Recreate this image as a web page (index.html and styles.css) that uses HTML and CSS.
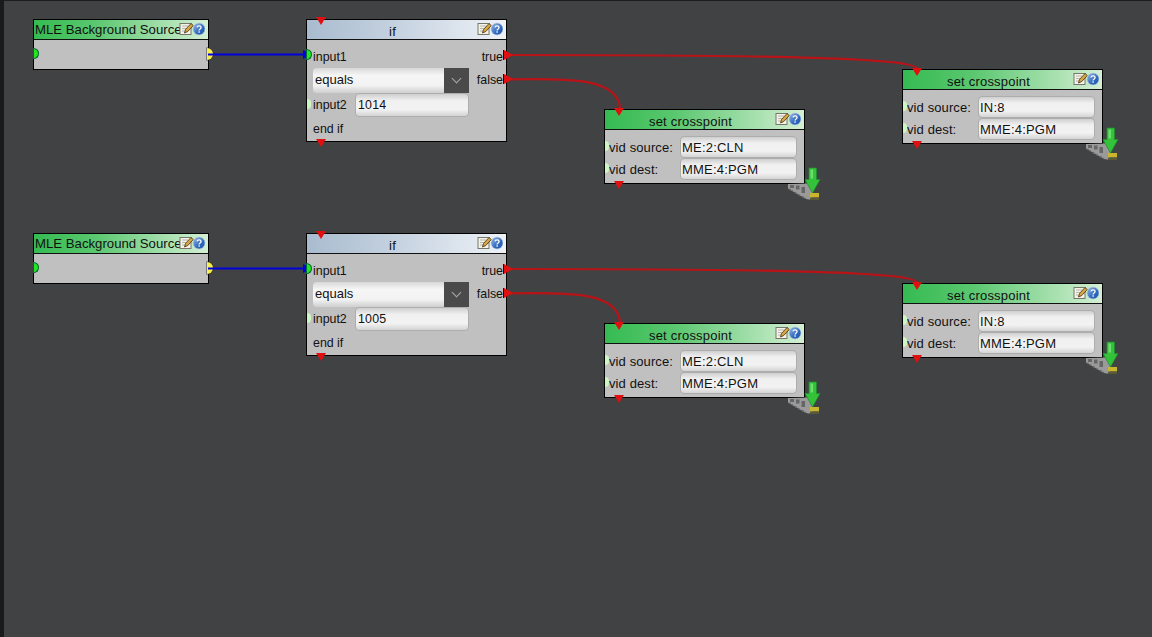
FILE: index.html
```html
<!DOCTYPE html>
<html lang="en">
<head>
<meta charset="utf-8">
<title>Logic graph</title>
<link rel="stylesheet" href="styles.css">
</head>
<body>
<svg class="defs" width="0" height="0" aria-hidden="true">
  <defs>
    <linearGradient id="helpfill" x1="0" y1="0" x2="1" y2="1"><stop offset="0" stop-color="#9dbde8"/><stop offset=".6" stop-color="#2f68bd"/><stop offset="1" stop-color="#1f55a8"/></linearGradient>
    <symbol id="tools" viewBox="0 0 26 14">
      <rect x="1" y="1.500" width="11" height="11" fill="#f4f2e6" stroke="#77766c"/>
      <path d="M3 4h6M3 6.500h4M3 9h3" stroke="#a5a49a" stroke-width=".8"/>
      <path d="M5.500 11l1-3.500 5.500-6 2.300 2-5.500 6z" fill="#d9a441" stroke="#3f3217" stroke-width=".8"/>
      <circle cx="20" cy="7" r="6" fill="url(#helpfill)" stroke="#b9cbe2" stroke-width=".6"/>
      <path d="M18 5.400c.3-1.900 4.100-2 4.100.2 0 1.400-2 1.300-2 2.800" fill="none" stroke="#fff" stroke-width="1.300"/>
      <rect x="19.400" y="9.300" width="1.400" height="1.400" fill="#fff"/>
    </symbol>
    <symbol id="deploy" viewBox="0 0 36 36">
      <path d="M2 17l20-.5 4 8v8.500l-6-1-18-10.500z" fill="#9a9a9a"/>
      <path d="M4 18h4v3h-4zM10 18.500h3.500v4h-3.500zM15.500 20h3.500v6h-3.500z" fill="#666"/>
      <path d="M3 22l4 2M9 25.500l5 3M16 29.500l4 2" stroke="#6a6a6a" stroke-width="1.500" stroke-dasharray="2 1.500"/>
      <path d="M24 26h9v4.500h-9z" fill="#c9b62e"/>
      <path d="M24 30.500h9v2.500h-9z" fill="#5a5a3a"/>
      <path d="M23 1h7.500v11.500h3.500l-7.500 13.500-7.500-13.500h4z" fill="#33c23a" stroke="#1d8f2c" stroke-width=".7"/>
      <path d="M24.500 2.500h2.500v9h-2.500z" fill="#6fdc70"/>
    </symbol>
  </defs>
</svg>
<main class="canvas">
  <section class="flow">
    <svg class="wires" viewBox="0 0 1152 214" width="1152" height="214" aria-hidden="true">
      <path class="wire blue" d="M208 54.500H304"/>
      <path class="head-blue" d="M303 50l9 4.500-9 4.500z"/>
      <path class="wire red" d="M506 55C780 55 917 58 917 69"/>
      <path class="wire red" d="M506 79.500C570 78 620 78 620 110"/>
    </svg>
    <article class="node source-node">
      <header class="head green"><span class="left-title">MLE Background Source</span><svg class="tools"><use href="#tools"/></svg></header>
      <div class="source-body"></div>
      <i class="port-in"></i><i class="port-out"></i>
    </article>
    <article class="node if-node">
      <header class="head steel"><span class="center-title">if</span><svg class="tools"><use href="#tools"/></svg></header>
      <div class="if-body">
        <div class="if-row"><span>input1</span><span>true</span></div>
        <div class="if-row"><div class="select"><span>equals</span><b class="chev"></b></div><span>false</span></div>
        <div class="if-row start"><span class="if-label">input2</span><div class="field wide">1014</div></div>
        <div class="if-row"><span>end if</span></div>
      </div>
      <i class="tri top"></i><i class="tri bottom"></i>
      <i class="port-pale p1"></i><i class="port-pale p2"></i><i class="out o1"></i><i class="out o2"></i>
      <i class="port-in small"></i>
    </article>
    <article class="node cross-node cross-a">
      <header class="head green"><span class="center-title">set crosspoint</span><svg class="tools"><use href="#tools"/></svg></header>
      <div class="cross-body">
        <div class="cross-row"><span class="cross-label">vid source:</span><div class="field">ME:2:CLN</div></div>
        <div class="cross-row"><span class="cross-label">vid dest:</span><div class="field">MME:4:PGM</div></div>
      </div>
      <i class="tri top"></i><i class="tri bottom"></i><i class="port-pale c1"></i><i class="port-pale c2"></i>
      <svg class="deploy"><use href="#deploy"/></svg>
    </article>
    <article class="node cross-node cross-b">
      <header class="head green"><span class="center-title">set crosspoint</span><svg class="tools"><use href="#tools"/></svg></header>
      <div class="cross-body">
        <div class="cross-row"><span class="cross-label">vid source:</span><div class="field">IN:8</div></div>
        <div class="cross-row"><span class="cross-label">vid dest:</span><div class="field">MME:4:PGM</div></div>
      </div>
      <i class="tri top"></i><i class="tri bottom"></i><i class="port-pale c1"></i><i class="port-pale c2"></i>
      <svg class="deploy"><use href="#deploy"/></svg>
    </article>
  </section>
  <section class="flow">
    <svg class="wires" viewBox="0 0 1152 214" width="1152" height="214" aria-hidden="true">
      <path class="wire blue" d="M208 54.500H304"/>
      <path class="head-blue" d="M303 50l9 4.500-9 4.500z"/>
      <path class="wire red" d="M506 55C780 55 917 58 917 69"/>
      <path class="wire red" d="M506 79.500C570 78 620 78 620 110"/>
    </svg>
    <article class="node source-node">
      <header class="head green"><span class="left-title">MLE Background Source</span><svg class="tools"><use href="#tools"/></svg></header>
      <div class="source-body"></div>
      <i class="port-in"></i><i class="port-out"></i>
    </article>
    <article class="node if-node">
      <header class="head steel"><span class="center-title">if</span><svg class="tools"><use href="#tools"/></svg></header>
      <div class="if-body">
        <div class="if-row"><span>input1</span><span>true</span></div>
        <div class="if-row"><div class="select"><span>equals</span><b class="chev"></b></div><span>false</span></div>
        <div class="if-row start"><span class="if-label">input2</span><div class="field wide">1005</div></div>
        <div class="if-row"><span>end if</span></div>
      </div>
      <i class="tri top"></i><i class="tri bottom"></i>
      <i class="port-pale p1"></i><i class="port-pale p2"></i><i class="out o1"></i><i class="out o2"></i>
      <i class="port-in small"></i>
    </article>
    <article class="node cross-node cross-a">
      <header class="head green"><span class="center-title">set crosspoint</span><svg class="tools"><use href="#tools"/></svg></header>
      <div class="cross-body">
        <div class="cross-row"><span class="cross-label">vid source:</span><div class="field">ME:2:CLN</div></div>
        <div class="cross-row"><span class="cross-label">vid dest:</span><div class="field">MME:4:PGM</div></div>
      </div>
      <i class="tri top"></i><i class="tri bottom"></i><i class="port-pale c1"></i><i class="port-pale c2"></i>
      <svg class="deploy"><use href="#deploy"/></svg>
    </article>
    <article class="node cross-node cross-b">
      <header class="head green"><span class="center-title">set crosspoint</span><svg class="tools"><use href="#tools"/></svg></header>
      <div class="cross-body">
        <div class="cross-row"><span class="cross-label">vid source:</span><div class="field">IN:8</div></div>
        <div class="cross-row"><span class="cross-label">vid dest:</span><div class="field">MME:4:PGM</div></div>
      </div>
      <i class="tri top"></i><i class="tri bottom"></i><i class="port-pale c1"></i><i class="port-pale c2"></i>
      <svg class="deploy"><use href="#deploy"/></svg>
    </article>
  </section>
</main>
</body>
</html>
```
FILE: styles.css
```css
* { box-sizing: border-box; }
html, body { margin: 0; height: 100%; overflow: hidden; background: #404244; }
body { font: 12.400px/16px "Liberation Sans", Arial, sans-serif; color: #111; }
.defs { position: absolute; }
.canvas {
  height: 637px;
  background: #404244;
  border-top: 1px solid #1c1c1c;
  border-left: 4px solid #1a1a1a;
}
.flow { position: relative; height: 214px; margin-left: -4px; }
.flow:first-child { margin-top: -1px; }
.wires { position: absolute; left: 0; top: 0; z-index: 3; pointer-events: none; overflow: visible; }
.wire { fill: none; stroke-width: 2.200; }
.blue { stroke: #0000d8; }
.red { stroke: #b81418; }
.head-blue { fill: #0000e0; }
.node {
  position: absolute;
  background: #c0c0c0;
  border: 1px solid #000;
  display: flex;
  flex-direction: column;
}
.source-node { left: 33px; top: 19px; width: 176px; height: 51px; }
.if-node { left: 306px; top: 19px; width: 201px; height: 123px; }
.cross-node { width: 201px; height: 75px; }
.cross-a { left: 604px; top: 109px; }
.cross-b { left: 902px; top: 69px; }
.head {
  height: 20px;
  flex: none;
  display: flex;
  align-items: center;
  border-bottom: 1px solid #111;
  position: relative;
}
.green { background: linear-gradient(90deg, #35bb52 0%, #5ac76f 35%, #d4efd4 100%); }
.steel { background: linear-gradient(90deg, #a9bccf 0%, #c5d2e0 45%, #eef2f7 100%); }
.left-title { padding-left: 1px; font-size: 13.200px; white-space: nowrap; }
.center-title { flex: 1; text-align: center; padding: 4px 28px 0 0; font-size: 13px; letter-spacing: .2px; }
.tools { position: absolute; right: 3px; top: 2px; width: 26px; height: 14px; }
.source-body { flex: 1; }
.if-body { padding: 5px 3px 0 6px; display: flex; flex-direction: column; }
.if-row { display: flex; justify-content: space-between; align-items: center; height: 24px; }
.if-row:nth-child(2) { margin-top: -1px; }
.if-row:nth-child(3) { margin-top: 1px; }
.if-row.start { justify-content: flex-start; }
.if-label { width: 42px; }
.select {
  width: 156px; height: 25px;
  display: flex; align-items: center; justify-content: space-between;
  background: linear-gradient(#d8d8d8, #f6f6f6 30%, #f2f2f2 70%, #cfcfcf);
  border-radius: 4px 0 0 4px;
  padding-left: 2px;
  font-size: 13px;
}
.chev {
  width: 25px; height: 25px; background: #4a4a4a; position: relative;
}
.chev::after {
  content: ""; position: absolute; left: 9px; top: 7px; width: 6px; height: 6px;
  border: solid #a8a8a8; border-width: 0 1px 1px 0; transform: rotate(45deg);
}
.field {
  flex: none;
  width: 117px; height: 22px;
  padding: 2px 1px 1px;
  border-radius: 4px;
  background: linear-gradient(#cfcfcf, #f0f0f0 30%, #f2f2f2 70%, #d4d4d4);
  border: 1px solid #adadad;
  line-height: 17px;
  font-size: 13px;
  letter-spacing: .2px;
}
.field.wide { width: 114px; height: 24px; line-height: 19px; font-size: 12.400px; padding-left: 2px; }
.cross-body { padding: 6px 0 0 4px; display: flex; flex-direction: column; font-size: 13px; letter-spacing: .1px; }
.cross-row { display: flex; align-items: center; height: 22px; }
.cross-label { width: 71px; padding-top: 1px; }
.tri {
  position: absolute; left: 9px; width: 0; height: 0; z-index: 4;
  border: solid transparent; border-width: 8px 5.500px 0; border-top-color: #e01010;
}
.tri.top { top: -2px; }
.if-node .tri.top { top: -3px; }
.tri.bottom { bottom: -6px; }
.port-in {
  position: absolute; left: -1px; top: 28px; width: 6px; height: 11px; z-index: 4;
  background: #22e622; border: 1px solid #063; border-radius: 0 6px 6px 0;
}
.port-in.small { left: -1px; top: 29px; }
.port-out {
  position: absolute; right: -5px; top: 28px; width: 6px; height: 12px;
  background: #f6ef4c; border-radius: 0 6px 6px 0; z-index: 2;
  box-shadow: 0 0 0 .5px #333;
}
.port-pale {
  position: absolute; left: 0; width: 4px; height: 10px;
  background: #cdf6c0; border-radius: 0 5px 5px 0;
}
.p1 { top: 29px; } .p2 { top: 79px; }
.c1 { top: 31px; } .c2 { top: 53px; }
.out {
  position: absolute; right: -7px; width: 0; height: 0; z-index: 4;
  border: solid transparent; border-width: 5px 0 5px 9px; border-left-color: #e01010;
}
.out::before { content: ""; position: absolute; left: -10px; top: -5px; width: 1px; height: 10px; background: #111; }
.o1 { top: 30px; } .o2 { top: 54px; }
.deploy { position: absolute; right: -18px; bottom: -20px; width: 36px; height: 36px; z-index: 2; }
```
